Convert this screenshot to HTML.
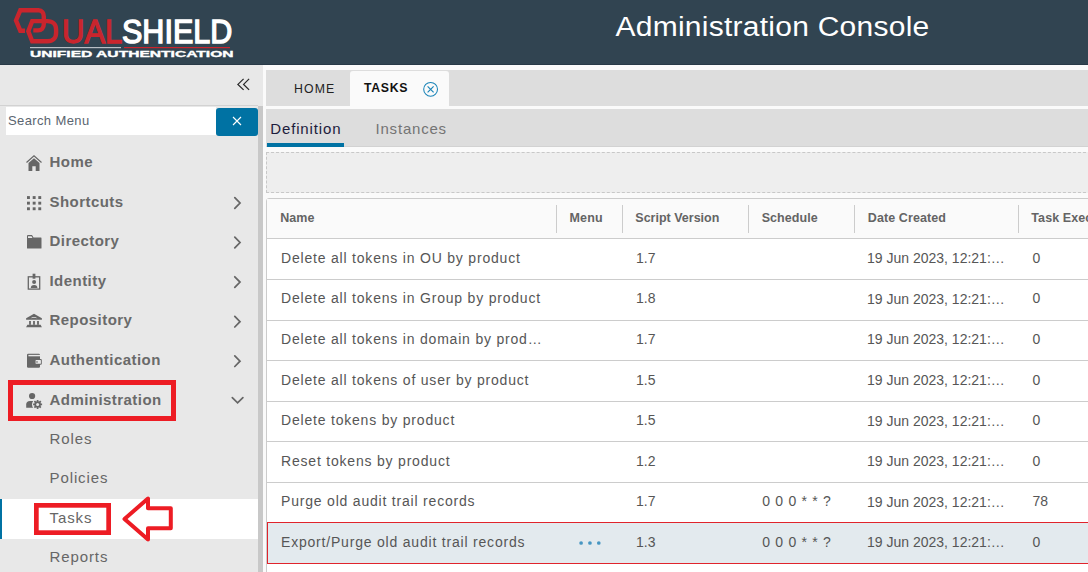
<!DOCTYPE html>
<html><head><meta charset="utf-8">
<style>
*{box-sizing:border-box;margin:0;padding:0}
html,body{width:1088px;height:572px;overflow:hidden;background:#fafafa;font-family:"Liberation Sans",sans-serif}
.a{position:absolute}
.t{position:absolute;line-height:1;white-space:nowrap}
#hdr{left:0;top:0;width:1088px;height:65px;background:#314451}
#side{left:0;top:65px;width:263px;height:507px;background:#e8e8e8}
.nav{color:#6a6a6a;font-weight:bold;font-size:15px;letter-spacing:0.45px}
.sub{color:#666;font-size:15px;letter-spacing:0.9px}
.ic{position:absolute}
.th{font-weight:bold;font-size:12.5px;color:#646464;letter-spacing:0.1px}
.td{font-size:14px;color:#565656}
.nm{letter-spacing:0.8px}
.hl{position:absolute;left:266px;width:822px;height:1px;background:#cccccc}
.vs{position:absolute;top:205px;width:1px;height:28px;background:#cccccc}
</style></head><body>
<!-- header -->
<div id="hdr" class="a">
  <svg class="a" style="left:0;top:0" width="260" height="65" viewBox="0 0 260 65">
    <g fill="none" stroke="#c9252d" stroke-width="4.4" stroke-linejoin="miter">
      <path d="M25 30.7 L20.3 30.7 L16 20.4 L20.3 10.3 L38.5 10.3 C42 10.3 43.8 13 43.8 16.5 L43.8 24 C43.8 28 41.5 30.4 38 30.4 L33.3 30.4"/>
      <path d="M32.2 21.1 L47.5 21.1 C53 21.1 56.1 24.5 56.1 29.5 L56.1 33 C56.1 38 53 41.3 47.5 41.3 L32.2 41.3 L28.3 31.2 Z"/>
    </g>
    <rect x="30" y="47" width="91" height="1.2" fill="#b9bfc6"/>
    <rect x="124" y="47" width="106" height="1.2" fill="#c9252d"/>
  </svg>
  <div class="t" style="left:62px;top:14.8px;font-size:33px;color:#c9252d;-webkit-text-stroke:1.3px #c9252d;letter-spacing:0px;transform-origin:0 0;transform:scaleX(0.94)">UAL</div>
  <div class="t" style="left:122.3px;top:14.8px;font-size:33px;color:#fff;-webkit-text-stroke:1.4px #fff;letter-spacing:0px;transform-origin:0 0;transform:scaleX(0.925)">SHIELD</div>
  <div class="t" style="left:30px;top:49px;font-size:9.6px;font-weight:bold;color:#fff;-webkit-text-stroke:0.35px #fff;transform-origin:0 0;transform:scaleX(1.625)">UNIFIED AUTHENTICATION</div>
  <div class="t" style="left:615.5px;top:10.9px;font-size:30px;color:#fff;letter-spacing:0.25px;transform-origin:0 25px;transform:scaleY(0.9)">Administration Console</div>
</div>

<div class="a" style="left:0;top:64px;width:1088px;height:1px;background:#283947"></div>
<!-- sidebar -->
<div id="side" class="a"></div>
<svg class="a" style="left:236px;top:78px" width="14" height="14" viewBox="0 0 14 14"><path d="M7.6 0.9 L1.9 6.4 L7.6 11.9 M13.1 0.9 L7.6 6.4 L13.1 11.9" fill="none" stroke="#2a2a2a" stroke-width="1.25"/></svg>
<div class="a" style="left:0;top:105px;width:258px;height:1px;background:#d2d2d2"></div>
<div class="a" style="left:6px;top:107px;width:210px;height:28px;background:#fff"></div>
<div class="t" style="left:8px;top:114px;font-size:13px;color:#5b6570;letter-spacing:0.38px">Search Menu</div>
<div class="a" style="left:216px;top:108px;width:42px;height:28px;background:#0072a3;border-radius:3px"></div>
<svg class="a" style="left:232px;top:116px" width="10" height="10" viewBox="0 0 10 10"><path d="M1 1 L9 9 M9 1 L1 9" stroke="#fff" stroke-width="1.1"/></svg>
<div class="a" style="left:258px;top:106px;width:5px;height:466px;background:#c8c8c8"></div>
<div class="a" style="left:263px;top:65px;width:3px;height:507px;background:#fafafa"></div>

<!-- nav icons -->
<svg class="ic" style="left:26px;top:155px" width="16" height="16" viewBox="0 0 16 16"><path d="M0.5 7.5 L8 0.8 L15.5 7.5" fill="none" stroke="#666" stroke-width="1.2"/><path d="M2.5 8 L8 3.2 L13.5 8 L13.5 16 L9.7 16 L9.7 11.2 L6.3 11.2 L6.3 16 L2.5 16 Z" fill="#666"/></svg>
<svg class="ic" style="left:26px;top:196px" width="16" height="15" viewBox="0 0 16 15"><g fill="#666"><rect x="1.0" y="0.1" width="2.9" height="2.9"/><rect x="6.7" y="0.1" width="2.9" height="2.9"/><rect x="12.3" y="0.1" width="2.9" height="2.9"/><rect x="1.0" y="5.7" width="2.9" height="2.9"/><rect x="6.7" y="5.7" width="2.9" height="2.9"/><rect x="12.3" y="5.7" width="2.9" height="2.9"/><rect x="1.0" y="11.3" width="2.9" height="2.9"/><rect x="6.7" y="11.3" width="2.9" height="2.9"/><rect x="12.3" y="11.3" width="2.9" height="2.9"/></g></svg>
<div class="t nav" style="left:49.5px;top:153.9px">Home</div>
<div class="t nav" style="left:49.5px;top:193.5px">Shortcuts</div>
<svg class="ic" style="left:27px;top:235px" width="15" height="14" viewBox="0 0 15 14"><path d="M0 1 Q0 0 1 0 L5 0 L6.5 2.5 L14 2.5 Q14.5 2.5 14.5 3.5 L14.5 13 Q14.5 13.5 14 13.5 L0.5 13.5 Q0 13.5 0 13 Z" fill="#666"/><path d="M1 1.2 L4.5 1.2 L5.5 3 L1 3 Z" fill="#e8e8e8"/></svg>
<div class="t nav" style="left:49.5px;top:233.1px">Directory</div>
<svg class="ic" style="left:27px;top:273px" width="14" height="18" viewBox="0 0 14 18"><rect x="1.3" y="3.8" width="11.4" height="12.3" fill="none" stroke="#666" stroke-width="1.3"/><rect x="5.6" y="0.7" width="2.8" height="5" fill="#666"/><circle cx="7.1" cy="8.9" r="2" fill="#666"/><path d="M3.8 14.9 Q3.8 11.9 7.1 11.9 Q10.4 11.9 10.4 14.9 Z" fill="#666"/></svg>
<div class="t nav" style="left:49.5px;top:272.7px">Identity</div>
<svg class="ic" style="left:24px;top:310px" width="20" height="20" viewBox="0 0 20 20"><path d="M10 3.7 L17.9 8.3 L17.9 9.7 L2.1 9.7 L2.1 8.3 Z" fill="#666"/><path d="M6.6 8.3 Q10 5.6 13.4 8.3 Q10 7.1 6.6 8.3 Z" fill="#e8e8e8"/><rect x="5.1" y="11" width="1.8" height="3.8" fill="#666"/><rect x="9.1" y="11" width="1.8" height="3.8" fill="#666"/><rect x="13.1" y="11" width="1.8" height="3.8" fill="#666"/><path d="M3.4 14.7 L16.6 14.7 L17.9 17.3 L2.1 17.3 Z" fill="#666"/></svg>
<div class="t nav" style="left:49.5px;top:312.3px">Repository</div>
<svg class="ic" style="left:22px;top:350px" width="24" height="22" viewBox="0 0 24 22"><rect x="5" y="3.8" width="13" height="14" rx="1.2" fill="#666"/><rect x="6.4" y="4.9" width="11.6" height="1.4" fill="#e8e8e8"/><rect x="12.7" y="9" width="7.1" height="5.8" rx="1.1" fill="#666"/><rect x="13.6" y="10" width="5.3" height="3.8" rx="0.5" fill="#eaeaea"/><circle cx="15" cy="11.9" r="0.9" fill="#888"/></svg>
<div class="t nav" style="left:49.5px;top:351.9px">Authentication</div>
<svg class="ic" style="left:26px;top:392px" width="18" height="18" viewBox="0 0 18 18"><circle cx="6.1" cy="4" r="3.1" fill="#666"/><path d="M0.2 15.8 L0.2 12.5 Q0.2 9 4 9 L7 9 L7 15.8 Z" fill="#666"/><g transform="translate(11.6,12.4)"><circle r="5.6" fill="#e8e8e8"/><circle r="3.2" fill="#666"/><g stroke="#666" stroke-width="1.7"><path d="M0 -4.5 L0 4.5 M-4.5 0 L4.5 0 M-3.2 -3.2 L3.2 3.2 M3.2 -3.2 L-3.2 3.2"/></g><circle r="1.5" fill="#e8e8e8"/></g></svg>
<div class="t nav" style="left:49.5px;top:391.5px">Administration</div>
<!-- chevrons -->
<svg class="a" style="left:232px;top:196px" width="12" height="180" viewBox="0 0 12 180">
 <g fill="none" stroke="#666" stroke-width="1.75" stroke-linecap="round">
 <path d="M2.8 1.7 L8 7 L2.8 12.3"/>
 <path d="M2.8 41.2 L8 46.5 L2.8 51.8"/>
 <path d="M2.8 80.8 L8 86.1 L2.8 91.4"/>
 <path d="M2.8 120.4 L8 125.7 L2.8 131.0"/>
 <path d="M2.8 159.9 L8 165.2 L2.8 170.5"/>
 </g></svg>
<svg class="a" style="left:230px;top:395px" width="15" height="11" viewBox="0 0 15 11"><path d="M2.3 2.6 L7.6 7.9 L12.9 2.6" fill="none" stroke="#666" stroke-width="1.7" stroke-linecap="round"/></svg>
<div class="t sub" style="left:49.5px;top:430.5px">Roles</div>
<div class="t sub" style="left:49.5px;top:470.1px">Policies</div>
<div class="a" style="left:0;top:499px;width:258px;height:40px;background:#fff"></div>
<div class="a" style="left:0;top:499px;width:2px;height:40px;background:#0072a3"></div>
<div class="t sub" style="left:49.5px;top:509.7px">Tasks</div>
<div class="t sub" style="left:49.5px;top:549.3px">Reports</div>
<!-- annotations -->
<div class="a" style="left:8px;top:380px;width:168px;height:41px;border:5px solid #ed1c24"></div>
<svg class="a" style="left:34px;top:503px" width="77" height="32" viewBox="0 0 77 32"><rect x="2.35" y="2.35" width="72.3" height="27.3" fill="none" stroke="#ed1c24" stroke-width="4.7"/></svg>
<svg class="a" style="left:115px;top:490px" width="65" height="60" viewBox="0 0 65 60"><path d="M9.5 29 L33 8.5 L33 18.2 L55.8 18.2 L55.8 38.3 L33 38.3 L33 49.5 Z" fill="none" stroke="#ed1c24" stroke-width="4" stroke-linejoin="round"/></svg>

<!-- main tabs -->
<div class="a" style="left:266px;top:70px;width:822px;height:35.5px;background:#dddddd"></div>
<div class="t" style="left:294px;top:83px;font-size:12.3px;color:#222;letter-spacing:1.1px">HOME</div>
<div class="a" style="left:350px;top:71px;width:99px;height:34.5px;background:#fafafa;border-radius:3px 3px 0 0"></div>
<div class="t" style="left:364px;top:82.2px;font-size:12.3px;font-weight:bold;color:#111;letter-spacing:0.65px">TASKS</div>
<svg class="a" style="left:422px;top:81px" width="17" height="17" viewBox="0 0 17 17"><circle cx="8.6" cy="8.3" r="6.9" fill="none" stroke="#1a84b8" stroke-width="1.05"/><path d="M5.6 5.3 L11.6 11.3 M11.6 5.3 L5.6 11.3" stroke="#1a84b8" stroke-width="1.15"/></svg>
<div class="a" style="left:266px;top:109px;width:822px;height:37.5px;background:#dddddd"></div>
<div class="a" style="left:266px;top:146px;width:822px;height:1px;background:#d2d2d2"></div>
<div class="a" style="left:267px;top:143px;width:77px;height:4px;background:#0072a3"></div>
<div class="t" style="left:270.3px;top:120.6px;font-size:15px;color:#1c1c3c;letter-spacing:0.85px">Definition</div>
<div class="t" style="left:375.5px;top:120.6px;font-size:15px;color:#747474;letter-spacing:0.8px">Instances</div>
<div class="a" style="left:266px;top:152px;width:830px;height:41px;background:#eeeeee;border:1px dashed #c8c8c8"></div>

<!-- table -->
<div class="a" style="left:266px;top:198px;width:830px;height:380px;background:#fff;border:1px solid #cccccc;border-radius:3px"></div>
<div class="a" style="left:267px;top:199px;width:830px;height:39px;background:#fafafa"></div>
<div class="vs" style="left:556px"></div>
<div class="vs" style="left:622px"></div>
<div class="vs" style="left:748px"></div>
<div class="vs" style="left:854px"></div>
<div class="vs" style="left:1018px"></div>
<div class="t th" style="left:280.2px;top:212px">Name</div>
<div class="t th" style="left:569.6px;top:212px">Menu</div>
<div class="t th" style="left:635.3px;top:212px;letter-spacing:0px">Script Version</div>
<div class="t th" style="left:761.7px;top:212px;letter-spacing:0.05px">Schedule</div>
<div class="t th" style="left:867.8px;top:212px">Date Created</div>
<div class="t th" style="left:1031.3px;top:212px">Task Execution</div>
<div class="hl" style="top:238px"></div>
<div class="hl" style="top:279px"></div>
<div class="hl" style="top:319.5px"></div>
<div class="hl" style="top:360.3px"></div>
<div class="hl" style="top:401px"></div>
<div class="hl" style="top:441.3px"></div>
<div class="hl" style="top:482px"></div>
<div class="a" style="left:267px;top:522px;width:830px;height:41.5px;background:#e3eaee;border:1.3px solid #e0242c"></div>
<div id="rows">
<div class="t td nm" style="left:281px;top:250.75px">Delete all tokens in OU by product</div>
<div class="t td" style="left:636px;top:250.75px">1.7</div>
<div class="t td" style="left:867px;top:251.25px">19 Jun 2023, 12:21:…</div>
<div class="t td" style="left:1032.4px;top:250.75px">0</div>
<div class="t td nm" style="left:281px;top:291.35px">Delete all tokens in Group by product</div>
<div class="t td" style="left:636px;top:291.35px">1.8</div>
<div class="t td" style="left:867px;top:291.85px">19 Jun 2023, 12:21:…</div>
<div class="t td" style="left:1032.4px;top:291.35px">0</div>
<div class="t td nm" style="left:281px;top:331.95px">Delete all tokens in domain by prod…</div>
<div class="t td" style="left:636px;top:331.95px">1.7</div>
<div class="t td" style="left:867px;top:332.45px">19 Jun 2023, 12:21:…</div>
<div class="t td" style="left:1032.4px;top:331.95px">0</div>
<div class="t td nm" style="left:281px;top:372.55px">Delete all tokens of user by product</div>
<div class="t td" style="left:636px;top:372.55px">1.5</div>
<div class="t td" style="left:867px;top:373.05px">19 Jun 2023, 12:21:…</div>
<div class="t td" style="left:1032.4px;top:372.55px">0</div>
<div class="t td nm" style="left:281px;top:413.15px">Delete tokens by product</div>
<div class="t td" style="left:636px;top:413.15px">1.5</div>
<div class="t td" style="left:867px;top:413.65px">19 Jun 2023, 12:21:…</div>
<div class="t td" style="left:1032.4px;top:413.15px">0</div>
<div class="t td nm" style="left:281px;top:453.75px">Reset tokens by product</div>
<div class="t td" style="left:636px;top:453.75px">1.2</div>
<div class="t td" style="left:867px;top:454.25px">19 Jun 2023, 12:21:…</div>
<div class="t td" style="left:1032.4px;top:453.75px">0</div>
<div class="t td nm" style="left:281px;top:494.35px">Purge old audit trail records</div>
<div class="t td" style="left:636px;top:494.35px">1.7</div>
<div class="t td" style="left:762.3px;top:494.35px;letter-spacing:0.7px">0 0 0 * * ?</div>
<div class="t td" style="left:867px;top:494.85px">19 Jun 2023, 12:21:…</div>
<div class="t td" style="left:1032.4px;top:494.35px">78</div>
<div class="t td nm" style="left:281px;top:534.95px">Export/Purge old audit trail records</div>
<svg class="a" style="left:578px;top:540.3px" width="26" height="6" viewBox="0 0 26 6"><g fill="#4796c2"><circle cx="3.1" cy="3" r="1.85"/><circle cx="11.95" cy="3" r="1.85"/><circle cx="20.8" cy="3" r="1.85"/></g></svg>
<div class="t td" style="left:636px;top:534.95px">1.3</div>
<div class="t td" style="left:762.3px;top:534.95px;letter-spacing:0.7px">0 0 0 * * ?</div>
<div class="t td" style="left:867px;top:535.45px">19 Jun 2023, 12:21:…</div>
<div class="t td" style="left:1032.4px;top:534.95px">0</div>
</div>
</body></html>
